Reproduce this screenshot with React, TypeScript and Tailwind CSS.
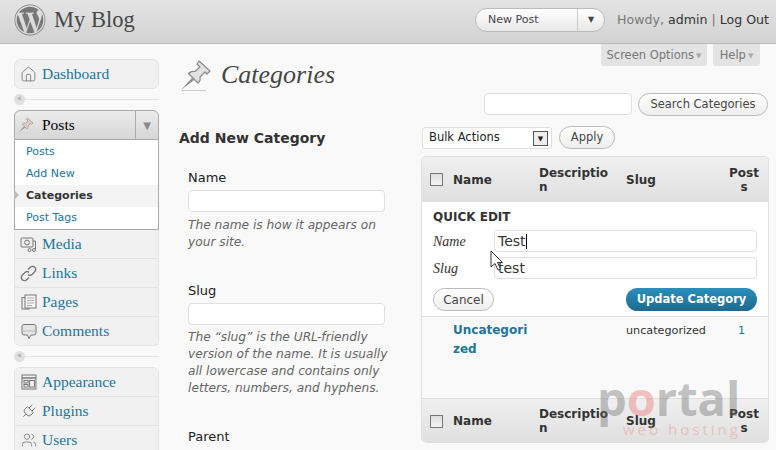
import { FaWordpress } from "react-icons/fa"
import { House, Plug, Users } from "lucide-react"

const serif = "font-['Liberation_Serif',serif]"

function Pin({ size = 32, tint = "#e2e2e2" }: { size?: number; tint?: string }) {
	return (
		<svg width={size} height={size} viewBox="0 0 32 32" className="shrink-0">
			<path d="M1 31 L12 19 L14 21 Z" fill="#888" />
			<path d="M2 31.5 H26" stroke="#ccc" strokeWidth="1" />
			<path
				d="M19 2 L30 12 L27 15 L25 13 L20 18 C20.5 21 19.5 23 18 24 L8.5 14.5 C10 13 12.5 12 15 12.5 L20 8 L17 5 Z"
				fill={tint}
				stroke="#8a8a8a"
				strokeWidth="1.2"
				strokeLinejoin="round"
			/>
		</svg>
	)
}

function MediaIcon() {
	return (
		<svg width="17" height="17" viewBox="0 0 17 17" fill="none" stroke="#777" strokeWidth="1">
			<rect x="1" y="2" width="12" height="9" rx="1" fill="#eee" />
			<circle cx="7" cy="6.5" r="2.4" />
			<path d="M13 5 H15.5 V13" />
			<circle cx="9.5" cy="14" r="1.5" />
			<circle cx="14" cy="14" r="1.5" />
		</svg>
	)
}

function LinksIcon() {
	return (
		<svg width="17" height="17" viewBox="0 0 17 17" fill="none" stroke="#777" strokeWidth="1.4">
			<path d="M8 4.5 L10 2.5 C11.5 1 13.5 1 15 2.5 C16 4 16 5.5 14.5 7 L12 9.5 C10.5 11 9 10.5 8 9.5" />
			<path d="M9 12.5 L7 14.5 C5.5 16 3.5 16 2 14.5 C1 13 1 11.5 2.5 10 L5 7.5 C6.5 6 8 6.5 9 7.5" />
		</svg>
	)
}

function PagesIcon() {
	return (
		<svg width="16" height="16" viewBox="0 0 16 16" fill="#eee" stroke="#777" strokeWidth="1">
			<rect x="1" y="3.5" width="7" height="11.5" />
			<rect x="4" y="1" width="11" height="13" fill="#f6f6f6" />
			<path d="M6 4 H13 M6 6.5 H13 M6 9 H13 M6 11.5 H11" stroke="#aaa" />
		</svg>
	)
}

function CommentsIcon() {
	return (
		<svg width="16" height="17" viewBox="0 0 16 17" fill="#e4e4e4" stroke="#777" strokeWidth="1">
			<path d="M3 1.5 H13 A2 2 0 0 1 15 3.5 V10 A2 2 0 0 1 13 12 H10 L8 15.5 L6.5 12 H3 A2 2 0 0 1 1 10 V3.5 A2 2 0 0 1 3 1.5 Z" />
			<path d="M1.5 8 H14.5" stroke="#bbb" />
		</svg>
	)
}

function AppearanceIcon() {
	return (
		<svg width="16" height="16" viewBox="0 0 16 16" fill="none" stroke="#777" strokeWidth="1">
			<rect x="1" y="1" width="14" height="14" fill="#eee" />
			<path d="M1 4 H15" strokeWidth="1.5" />
			<rect x="3" y="6.5" width="4" height="2.5" />
			<rect x="3" y="10.5" width="4" height="2.5" />
			<rect x="8.5" y="6.5" width="5" height="6.5" />
		</svg>
	)
}

function Cursor() {
	return (
		<svg width="14" height="22" viewBox="0 0 14 22" className="absolute left-[490px] top-[250px]">
			<path d="M1 1 V17 L5 13.5 L8 20 L10.5 19 L7.5 12.5 H12.5 Z" fill="#fff" stroke="#333" strokeWidth="1" />
		</svg>
	)
}

function MenuItem({
	label,
	icon,
	last,
}: {
	label: string
	icon: React.ReactNode
	last?: boolean
}) {
	return (
		<div
			className={`flex items-center bg-[#f1f1f1] pl-[5px] ${last ? "h-[28px]" : "h-[29px] border-b border-[#e3e3e3]"}`}
		>
			<span className="flex w-[17px] justify-center text-[#777]">{icon}</span>
			<span className={`${serif} ml-[5px] text-[15.5px] text-[#21759b]`}>{label}</span>
		</div>
	)
}

function Separator() {
	return (
		<div className="flex h-[21px] items-center pb-px">
			<span className="flex h-[11px] w-[11px] items-center justify-center rounded-full bg-[#e0e0e0] text-[8px] leading-none text-[#999]">
				«
			</span>
			<span className="h-px flex-1 bg-[#e3e3e3]" />
		</div>
	)
}

function Sidebar() {
	return (
		<aside className="ml-[14px] mt-[15px] w-[145px] shrink-0">
			<div className="flex h-[30px] items-center rounded-[6px] border border-[#e3e3e3] bg-[#f1f1f1] pl-[5px]">
				<House size={17} strokeWidth={1.2} className="text-[#777]" />
				<span className={`${serif} ml-[5px] text-[15.5px] text-[#21759b]`}>Dashboard</span>
			</div>
			<Separator />
			<div className="relative">
				<div className="flex h-[30px] items-center rounded-t-[6px] border border-[#aaa] bg-gradient-to-b from-[#ececec] to-[#d6d6d6]">
					<span className="ml-[3px]">
						<Pin size={16} tint="#e8c8c8" />
					</span>
					<span className={`${serif} ml-[8px] flex-1 text-[15.5px] text-black`}>Posts</span>
					<span className="flex h-full w-[23px] items-center justify-center border-l border-[#aaa] text-[10px] text-[#888]">
						▼
					</span>
				</div>
				<div className="border-x border-b border-[#aaa] bg-white pt-px text-[11px] text-[#21759b]">
					<div className="flex h-[22px] items-center pl-[11px]">Posts</div>
					<div className="flex h-[22px] items-center pl-[11px]">Add New</div>
					<div className="flex h-[22px] items-center bg-[#f4f4f4] pl-[11px] font-bold text-[#333]">Categories</div>
					<div className="flex h-[22px] items-center pl-[11px]">Post Tags</div>
				</div>
				<span className="absolute left-0 top-[80px] h-0 w-0 border-y-[5px] border-l-[5px] border-y-transparent border-l-[#bbb]" />
			</div>
			<div className="overflow-hidden rounded-b-[6px] border border-t-0 border-[#e3e3e3]">
				<MenuItem label="Media" icon={<MediaIcon />} />
				<MenuItem label="Links" icon={<LinksIcon />} />
				<MenuItem label="Pages" icon={<PagesIcon />} />
				<MenuItem label="Comments" icon={<CommentsIcon />} last />
			</div>
			<Separator />
			<div className="overflow-hidden rounded-t-[6px] border border-[#e3e3e3]">
				<MenuItem label="Appearance" icon={<AppearanceIcon />} />
				<MenuItem label="Plugins" icon={<Plug size={17} strokeWidth={1.2} className="rotate-45" />} />
				<MenuItem label="Users" icon={<Users size={16} strokeWidth={1.2} />} />
			</div>
		</aside>
	)
}

function AddForm() {
	return (
		<div className="ml-[20px] w-[242px] shrink-0">
			<h3 className="mt-[14px] text-[14px] font-bold leading-[20px] text-[#333]">Add New Category</h3>
			<div className="ml-[9px] w-[197px]">
				<label className="mt-[21px] block text-[13px] leading-[18px] text-[#222]">Name</label>
				<div className="mt-[3px] h-[22px] rounded-[4px] border border-[#dfdfdf] bg-white" />
				<p className="mt-[5px] w-[204px] text-[12.2px] italic leading-[17px] text-[#666]">
					The name is how it appears on
					<br />
					your site.
				</p>
				<label className="mt-[31px] block text-[13px] leading-[18px] text-[#222]">Slug</label>
				<div className="mt-[3px] h-[22px] rounded-[4px] border border-[#dfdfdf] bg-white" />
				<p className="mt-[4px] w-[204px] text-[12.2px] italic leading-[17px] text-[#666]">
					The “slug” is the URL-friendly
					<br />
					version of the name. It is usually
					<br />
					all lowercase and contains only
					<br />
					letters, numbers, and hyphens.
				</p>
				<label className="mt-[31px] block text-[13px] leading-[18px] text-[#222]">Parent</label>
			</div>
		</div>
	)
}

function ColumnRow({ foot }: { foot?: boolean }) {
	return (
		<div
			className={`grid h-[45px] grid-cols-[31px_86px_87px_103px_30px] items-center bg-gradient-to-b from-[#f0f0f0] to-[#dfdfdf] text-[12px] font-bold leading-[14px] text-[#333] ${
				foot ? "rounded-b-[5px] border-t border-[#dfdfdf]" : "rounded-t-[5px]"
			}`}
		>
			<span className="ml-[8px] h-[13px] w-[13px] border border-[#777] bg-gradient-to-b from-[#ddd] to-[#f4f4f4]" />
			<span>Name</span>
			<span className="w-[70px] break-all">Description</span>
			<span>Slug</span>
			<span className="break-all text-center">Posts</span>
		</div>
	)
}

function CategoryTable() {
	return (
		<div className="mt-[7px] overflow-hidden rounded-[5px] border border-[#dfdfdf] border-b-0">
			<ColumnRow />
			<div className="h-[114px] bg-white px-[11px] pt-[7px]">
				<div className="text-[12px] font-bold leading-[16px] text-[#333]">QUICK EDIT</div>
				<div className="mt-[5px] flex h-[22px] items-center">
					<span className={`${serif} w-[61px] text-[14px] italic text-[#333]`}>Name</span>
					<div className="flex h-[22px] flex-1 items-center rounded-[4px] border border-[#dfdfdf] pl-[3px] text-[14px] text-[#333]">
						Test<span className="h-[15px] w-px bg-black" />
					</div>
				</div>
				<div className="mt-[5px] flex h-[22px] items-center">
					<span className={`${serif} w-[61px] text-[14px] italic text-[#333]`}>Slug</span>
					<div className="flex h-[22px] flex-1 items-center rounded-[4px] border border-[#dfdfdf] pl-[3px] text-[14px] text-[#333]">
						test
					</div>
				</div>
				<div className="mt-[9px] flex items-center justify-between">
					<span className="flex h-[23px] w-[61px] items-center justify-center rounded-full border border-[#bbb] bg-gradient-to-b from-white to-[#eee] text-[12px] text-[#464646]">
						Cancel
					</span>
					<span className="flex h-[23px] w-[131px] items-center justify-center rounded-full bg-gradient-to-b from-[#2a8fbd] to-[#1e6a8d] pt-px text-[11.5px] font-bold text-white">
						Update Category
					</span>
				</div>
			</div>
			<div className="grid h-[82px] grid-cols-[31px_86px_87px_103px_30px] border-t border-[#dfdfdf] bg-[#f9f9f9] pt-[4px] text-[11.2px] leading-[19px] text-[#333]">
				<span />
				<span className="w-[80px] break-all text-[12px] font-bold text-[#21759b]">Uncategorized</span>
				<span />
				<span>uncategorized</span>
				<span className="pr-[5px] text-center text-[#21759b]">1</span>
			</div>
			<ColumnRow foot />
		</div>
	)
}

function Watermark() {
	return (
		<div className="pointer-events-none absolute left-[597px] top-[375px] w-[160px] font-['Open_Sans',sans-serif]">
			<div className="text-[47px] font-bold leading-[47px] text-[#666]/40">
				p<span className="text-[#e88]/50">o</span>rtal
			</div>
			<div className="-mt-[2px] ml-[26px] whitespace-nowrap text-[15px] leading-[18px] tracking-[3px] text-[#e99]/50">web hosting</div>
		</div>
	)
}

export default function App() {
	return (
		<div className="relative h-[450px] w-[776px] overflow-hidden bg-[#f9f9f9] font-['DejaVu_Sans',sans-serif]">
			{/* Header */}
			<header className="flex h-[44px] items-center border-b border-[#bbb] bg-gradient-to-b from-[#e4e4e4] to-[#d2d2d2] pb-[3px] pl-[14px] pr-[7px]">
				<FaWordpress size={32} className="text-[#777]" />
				<span className={`${serif} ml-[8px] flex-1 text-[22.5px] text-[#464646]`}>My Blog</span>
				<div className="flex h-[24px] w-[130px] items-center rounded-full border border-[#bbb] bg-gradient-to-b from-white to-[#e8e8e8] text-[11px] text-[#464646]">
					<span className="flex-1 pl-[12px]">New Post</span>
					<span className="flex h-full w-[27px] items-center justify-center border-l border-[#ccc] text-[8px]">▼</span>
				</div>
				<span className="ml-[12px] text-[12.6px] text-[#777]">
					Howdy, <span className="text-[#333]">admin</span> | <span className="text-[#333]">Log Out</span>
				</span>
			</header>

			<div className="flex">
				<Sidebar />
				<main className="flex-1">
					{/* Screen options */}
					<div className="flex justify-end gap-[6px] pr-[16px] text-[11.5px] text-[#777]">
						<span className="flex h-[22px] w-[106px] items-center justify-center rounded-b-[3px] bg-[#e3e3e3] pt-[2px]">
							Screen Options <span className="ml-[2px] text-[7px] text-[#aaa]">▼</span>
						</span>
						<span className="flex h-[22px] w-[47px] items-center justify-center rounded-b-[3px] bg-[#e3e3e3] pt-[2px]">
							Help <span className="ml-[2px] text-[7px] text-[#aaa]">▼</span>
						</span>
					</div>
					<div className="ml-[21px] mt-[-7px] flex items-center">
						<Pin />
						<h2 className={`${serif} ml-[9px] text-[26px] italic leading-[30px] text-[#464646]`}>Categories</h2>
					</div>
					<div className="flex justify-end gap-[6px] pr-[8px] pt-[2px]">
						<div className="h-[22px] w-[148px] rounded-[4px] border border-[#dfdfdf] bg-white" />
						<span className="flex h-[23px] w-[130px] items-center justify-center rounded-full border border-[#bbb] bg-gradient-to-b from-white to-[#eee] pt-px text-[11.5px] text-[#464646]">
							Search Categories
						</span>
					</div>
					<div className="-mt-[2px] flex">
						<AddForm />
						<div className="w-[348px] shrink-0">
							<div className="mt-[12px] flex items-center gap-[7px]">
								<div className="ml-px flex h-[22px] w-[130px] items-center justify-between rounded-[3px] border border-[#dfdfdf] bg-white pl-[6px] pr-[3px] pt-px text-[11.5px] text-[#222]">
									Bulk Actions
									<span className="flex h-[15px] w-[15px] items-end justify-center border border-[#555] bg-[#eee] text-[7px] leading-[12px]">▼</span>
								</div>
								<span className="flex h-[23px] w-[56px] items-center justify-center rounded-full border border-[#bbb] bg-gradient-to-b from-white to-[#eee] pt-px text-[11.5px] text-[#464646]">
									Apply
								</span>
							</div>
							<CategoryTable />
						</div>
					</div>
				</main>
			</div>
			<Cursor />
			<Watermark />
		</div>
	)
}
